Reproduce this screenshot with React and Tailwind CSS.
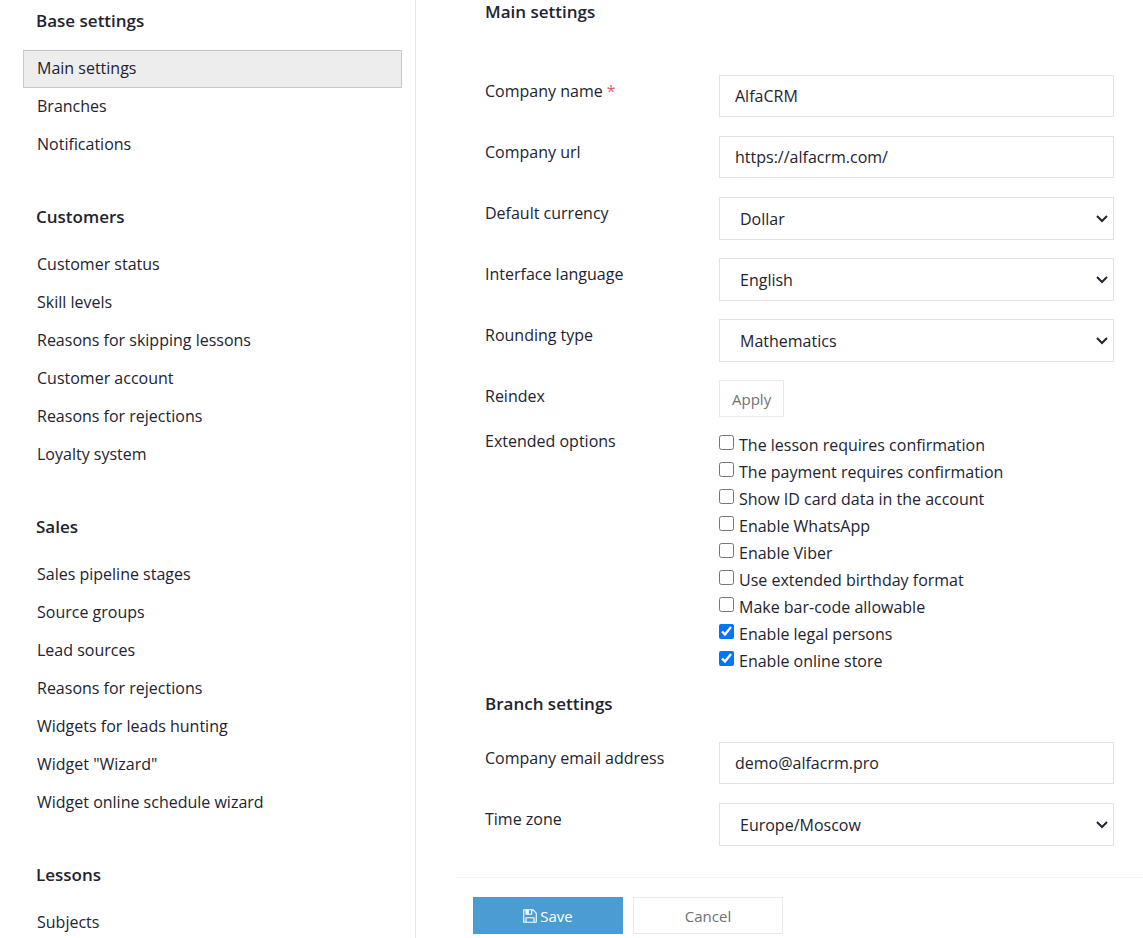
import { useState } from "react";

const menu = [
  {
    title: "Base settings",
    items: ["Main settings", "Branches", "Notifications"],
  },
  {
    title: "Customers",
    items: [
      "Customer status",
      "Skill levels",
      "Reasons for skipping lessons",
      "Customer account",
      "Reasons for rejections",
      "Loyalty system",
    ],
  },
  {
    title: "Sales",
    items: [
      "Sales pipeline stages",
      "Source groups",
      "Lead sources",
      "Reasons for rejections",
      "Widgets for leads hunting",
      'Widget "Wizard"',
      "Widget online schedule wizard",
    ],
  },
  {
    title: "Lessons",
    items: ["Subjects"],
  },
];

const extendedOptions = [
  { key: "lesson_confirm", label: "The lesson requires confirmation" },
  { key: "payment_confirm", label: "The payment requires confirmation" },
  { key: "id_card", label: "Show ID card data in the account" },
  { key: "whatsapp", label: "Enable WhatsApp" },
  { key: "viber", label: "Enable Viber" },
  { key: "birthday", label: "Use extended birthday format" },
  { key: "barcode", label: "Make bar-code allowable" },
  { key: "legal", label: "Enable legal persons" },
  { key: "store", label: "Enable online store" },
];

function FloppyIcon() {
  return (
    <svg viewBox="0 0 1536 1792" fill="currentColor" className="h-4 w-[14px]" aria-hidden="true">
      <path d="M384 1536h768v-384h-768v384zm896 0h128v-896q0-14-10-38.5t-20-34.5l-281-281q-10-10-34-20t-39-10v416q0 40-28 68t-68 28h-576q-40 0-68-28t-28-68v-416h-128v1280h128v-416q0-40 28-68t68-28h832q40 0 68 28t28 68v416zm-384-928v-320q0-13-9.5-22.5t-22.5-9.5h-192q-13 0-22.5 9.5t-9.5 22.5v320q0 13 9.5 22.5t22.5 9.5h192q13 0 22.5-9.5t9.5-22.5zm640 32v928q0 40-28 68t-68 28h-1344q-40 0-68-28t-28-68v-1344q0-40 28-68t68-28h928q40 0 88 20t76 48l280 280q28 28 48 76t20 88z" />
    </svg>
  );
}

function Sidebar() {
  const [active, setActive] = useState("Main settings");

  return (
    <nav className="w-[416px] shrink-0 border-r border-[#e7e7e7] pt-[9px] pl-[23px] pr-[13px]">
      {menu.map((group) => (
        <section key={group.title} className="mb-[41px]">
          <h2 className="mb-[17px] pl-[13px] text-[17px] leading-6 font-semibold">
            {group.title}
          </h2>
          <ul>
            {group.items.map((item) => (
              <li key={item}>
                <a
                  href="#"
                  onClick={() => setActive(item)}
                  className={
                    item === active
                      ? "block h-[38px] border border-[#c8c8c8] bg-[#ededed] px-[13px] py-[5px]"
                      : "block h-[38px] border border-transparent px-[13px] py-[5px]"
                  }
                >
                  {item}
                </a>
              </li>
            ))}
          </ul>
        </section>
      ))}
    </nav>
  );
}

function Row({ id, label, required, children }) {
  return (
    <div className="flex h-[61px]">
      <label htmlFor={id} className="w-[234px] shrink-0 pt-1">
        {label}
        {required && <span className="text-[#e4605e]"> *</span>}
      </label>
      <div className="min-w-0 grow">{children}</div>
    </div>
  );
}

function TextField({ id, label, value, required }) {
  return (
    <Row id={id} label={label} required={required}>
      <input
        id={id}
        type="text"
        defaultValue={value}
        className="block h-[42px] w-full border border-[#e2e2e4] bg-white px-[15px] outline-none"
      />
    </Row>
  );
}

function SelectField({ id, label, options }) {
  return (
    <Row id={id} label={label}>
      <div className="relative">
        <select
          id={id}
          className="block h-[43px] w-full appearance-none border border-[#e2e2e4] bg-white px-5 outline-none"
        >
          {options.map((o) => (
            <option key={o}>{o}</option>
          ))}
        </select>
        <svg
          viewBox="0 0 12 8"
          fill="none"
          stroke="currentColor"
          strokeWidth="2"
          className="pointer-events-none absolute top-[18px] right-1.5 h-2 w-3"
          aria-hidden="true"
        >
          <path d="M1 1l5 5 5-5" />
        </svg>
      </div>
    </Row>
  );
}

export default function App() {
  const [checked, setChecked] = useState(["legal", "store"]);

  function toggle(key) {
    setChecked((prev) =>
      prev.includes(key) ? prev.filter((k) => k !== key) : [...prev, key]
    );
  }

  return (
    <div className="flex h-screen overflow-hidden bg-white font-['Open_Sans',sans-serif] text-base leading-6 text-[#23232f]">
      <Sidebar />

      <form
        onSubmit={(e) => e.preventDefault()}
        className="min-w-0 grow pl-10"
      >
        <div className="px-[29px]">
          <h1 className="mb-[51px] text-[17px] leading-6 font-semibold">
            Main settings
          </h1>

          <TextField id="name" label="Company name" value="AlfaCRM" required />
          <TextField id="url" label="Company url" value="https://alfacrm.com/" />
          <SelectField id="currency" label="Default currency" options={["Dollar", "Euro"]} />
          <SelectField id="language" label="Interface language" options={["English", "Russian"]} />
          <SelectField id="rounding" label="Rounding type" options={["Mathematics", "Up", "Down"]} />

          <div className="mb-2 flex">
            <label htmlFor="reindex" className="w-[234px] shrink-0 pt-1">
              Reindex
            </label>
            <button
              id="reindex"
              type="button"
              className="h-[37px] cursor-pointer border border-[#e9e9e9] px-3 text-[15px] text-[#6f6f76]"
            >
              Apply
            </button>
          </div>

          <fieldset className="mb-4 flex" aria-labelledby="extended">
            <span id="extended" className="w-[234px] shrink-0 pt-1">
              Extended options
            </span>
            <div className="pt-2">
              {extendedOptions.map((o) => (
                <label key={o.key} className="flex h-[27px] items-start gap-[5px]">
                  <input
                    type="checkbox"
                    checked={checked.includes(o.key)}
                    onChange={() => toggle(o.key)}
                    className="mt-0.5 size-[15px]"
                  />
                  <span>{o.label}</span>
                </label>
              ))}
            </div>
          </fieldset>

          <h2 className="mb-[26px] text-[17px] leading-6 font-semibold">
            Branch settings
          </h2>
          <TextField id="email" label="Company email address" value="demo@alfacrm.pro" />
          <SelectField id="timezone" label="Time zone" options={["Europe/Moscow", "Europe/London"]} />
        </div>

        <div className="mt-[13px] flex gap-2.5 border-t border-[#f3f3f3] pt-[19px] pl-[17px]">
          <button
            type="submit"
            className="flex h-[37px] w-[150px] cursor-pointer items-center justify-center gap-[3px] bg-[#4a9cd3] text-[15px] text-white"
          >
            <FloppyIcon />
            Save
          </button>
          <button
            type="button"
            className="h-[37px] w-[150px] cursor-pointer border border-[#e9e9e9] text-[15px] text-[#6f6f76]"
          >
            Cancel
          </button>
        </div>
      </form>
    </div>
  );
}
